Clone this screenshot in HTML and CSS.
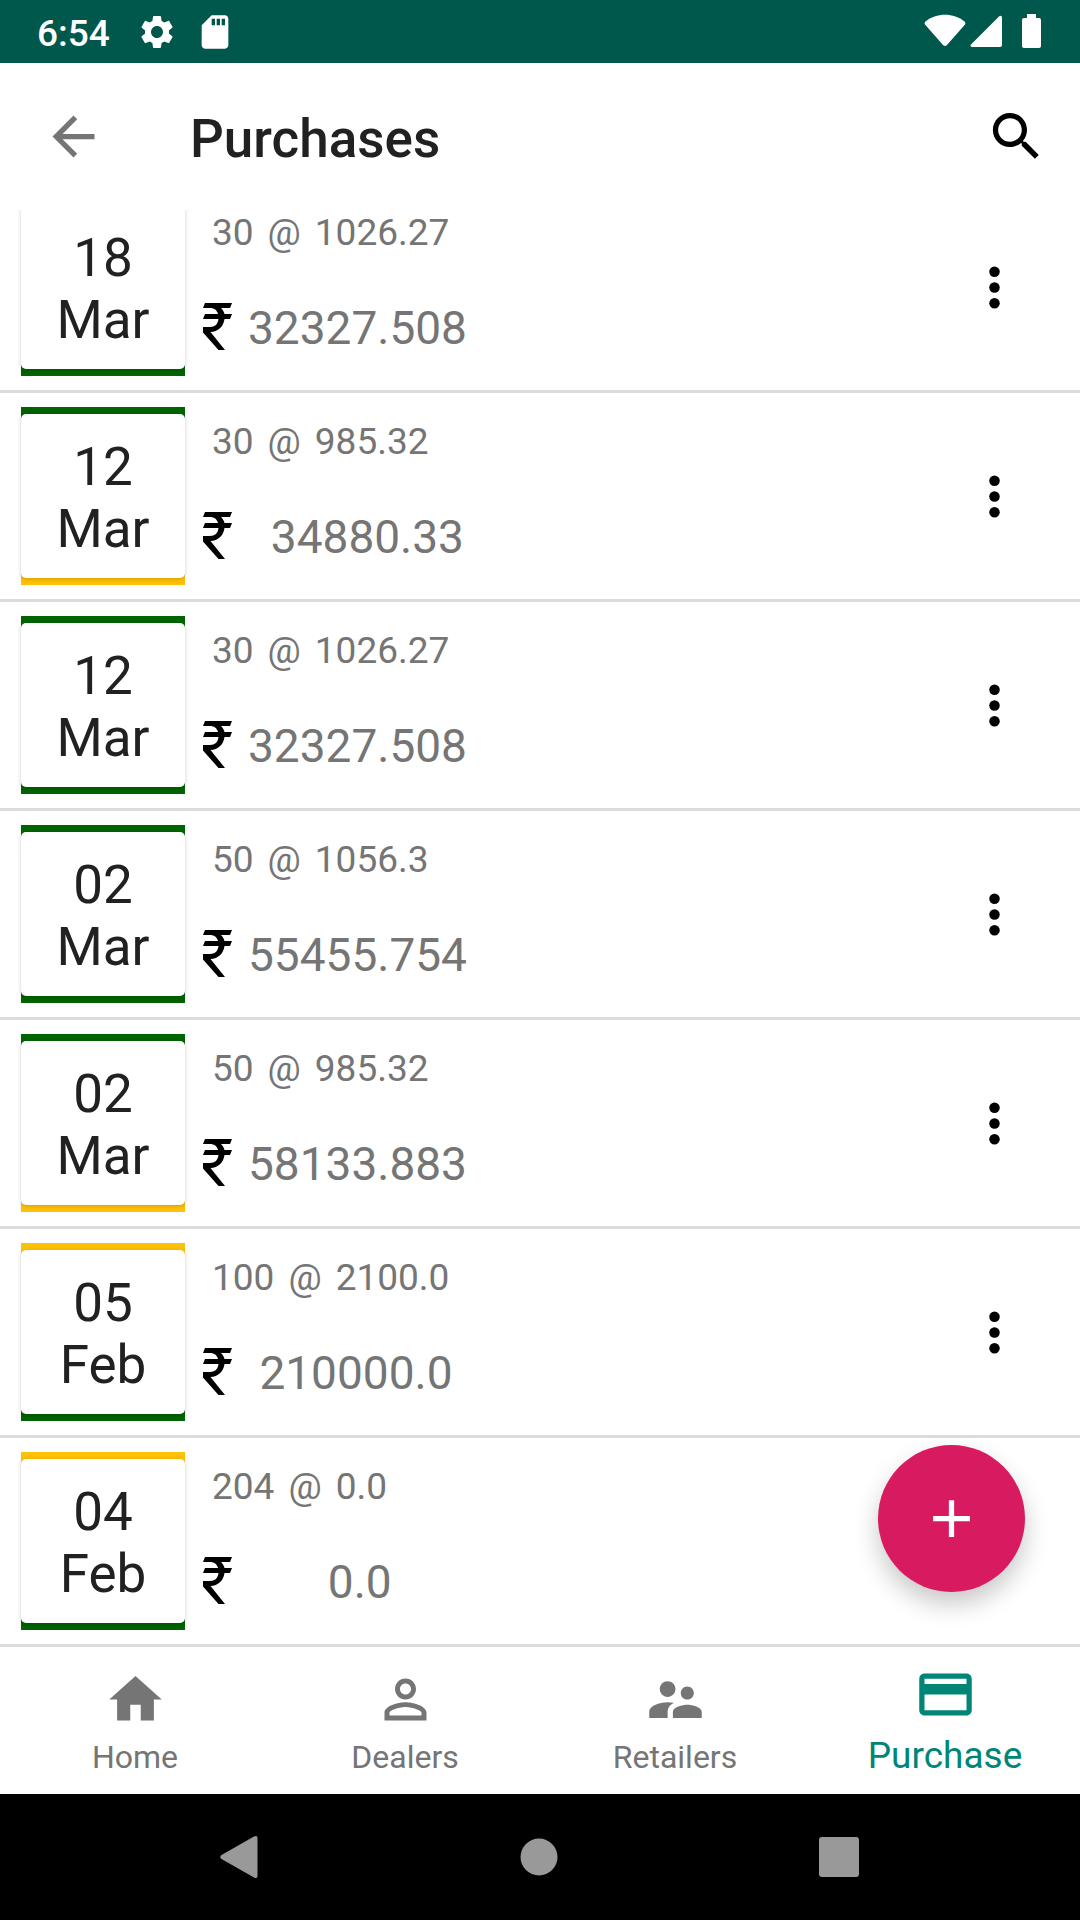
FILE: index.html
```html
<!DOCTYPE html>
<html lang="en">
<head>
    <meta charset="UTF-8">
    <meta name="viewport" content="width=device-width, initial-scale=1.0">
    <title>Purchases</title>
    <link rel="stylesheet" href="styles.css">
</head>
<body>

<!-- shared icons -->
<svg class="sprite" aria-hidden="true">
    <symbol id="rupee" viewBox="0 0 29 47">
        <path d="M2 0H29L27 5H18C20 7 21 9 21.500 11H29L27 16H21.500C20.500 24 15 28.500 7.500 29L22 47H15.500L0 29.500V24H7C12 24 15 21 15.500 16H0L2 11H15C14 7 11 5 7 5H0Z"/>
    </symbol>
    <symbol id="more" viewBox="0 0 24 24">
        <circle cx="12" cy="6" r="2"/><circle cx="12" cy="12" r="2"/><circle cx="12" cy="18" r="2"/>
    </symbol>
</svg>

<div class="status-bar">
    <span class="clock">6:54</span>
    <svg class="status-icon" viewBox="0 0 24 24"><path d="M19.140 12.940c.04-.3.06-.61.06-.94 0-.32-.02-.64-.07-.94l2.030-1.580c.18-.14.23-.41.12-.61l-1.920-3.320c-.12-.22-.37-.29-.59-.22l-2.390.96c-.5-.38-1.030-.7-1.620-.94L14.400 2.810c-.04-.24-.24-.41-.48-.41h-3.840c-.24 0-.43.17-.47.41L9.250 5.350c-.59.24-1.130.57-1.620.94L5.240 5.330c-.22-.08-.47 0-.59.22L2.740 8.870c-.12.21-.08.47.12.61l2.030 1.580c-.05.3-.09.63-.09.94s.02.64.07.94l-2.030 1.580c-.18.14-.23.41-.12.61l1.920 3.320c.12.22.37.29.59.22l2.390-.96c.5.38 1.030.7 1.620.94l.36 2.540c.05.24.24.41.48.41h3.840c.24 0 .44-.17.47-.41l.36-2.540c.59-.24 1.130-.56 1.620-.94l2.390.96c.22.08.47 0 .59-.22l1.920-3.320c.12-.22.07-.47-.12-.61l-2.010-1.580zM12 15.600c-1.980 0-3.600-1.620-3.600-3.600s1.620-3.600 3.600-3.600 3.600 1.620 3.600 3.600-1.620 3.600-3.600 3.600z"/></svg>
    <svg class="status-icon" viewBox="0 0 24 24"><path d="M18 2h-8L4.020 8 4 20c0 1.100.9 2 2 2h12c1.100 0 2-.9 2-2V4c0-1.100-.9-2-2-2zm-6 6h-2V4h2v4zm3 0h-2V4h2v4zm3 0h-2V4h2v4z"/></svg>
    <svg class="signals" viewBox="0 0 118 36">
        <path d="M1.500 7.500C12-1.500 30-1.500 40.500 7.500Q42 9 41 10.500L23 31Q21 33 19 31L1 10.500Q0 9 1.500 7.500Z"/>
        <path d="M47 30.500L75 2.500Q78 .5 78 4V31Q78 33 76 33H48.500Q45.500 32.500 47 30.500Z"/>
        <path d="M103 0H112V4H115Q117 4 117 6V32Q117 34 115 34H100Q98 34 98 32V6Q98 4 100 4H103Z"/>
    </svg>
</div>

<header class="app-bar">
    <button class="icon-button" aria-label="Back">
        <svg viewBox="0 0 24 24"><path d="M20 11H7.830l5.590-5.590L12 4l-8 8 8 8 1.410-1.410L7.830 13H20v-2z"/></svg>
    </button>
    <h1 class="title">Purchases</h1>
    <button class="icon-button dark" aria-label="Search">
        <svg viewBox="0 0 24 24"><path d="M15.500 14h-.79l-.28-.27C15.410 12.590 16 11.110 16 9.500 16 5.910 13.090 3 9.500 3S3 5.910 3 9.500 5.910 16 9.500 16c1.610 0 3.090-.59 4.230-1.570l.27.28v.79l5 4.990L20.490 19l-4.990-5zm-6 0C7.010 14 5 11.990 5 9.500S7.010 5 9.500 5 14 7.010 14 9.500 11.990 14 9.500 14z"/></svg>
    </button>
</header>

<main class="content">
    <ul class="purchases">
        <li class="purchase">
            <div class="date top-green bottom-green"><div class="date-card">18<br>Mar</div></div>
            <div class="details">
                <div class="quantity"><span>30</span><span>@</span><span>1026.27</span></div>
                <div class="total"><svg class="rupee"><use href="#rupee"/></svg><span class="amount">32327.508</span></div>
            </div>
            <button class="icon-button dark" aria-label="More options"><svg><use href="#more"/></svg></button>
        </li>
        <li class="purchase">
            <div class="date top-green bottom-amber"><div class="date-card">12<br>Mar</div></div>
            <div class="details">
                <div class="quantity"><span>30</span><span>@</span><span>985.32</span></div>
                <div class="total"><svg class="rupee"><use href="#rupee"/></svg><span class="amount">  34880.33</span></div>
            </div>
            <button class="icon-button dark" aria-label="More options"><svg><use href="#more"/></svg></button>
        </li>
        <li class="purchase">
            <div class="date top-green bottom-green"><div class="date-card">12<br>Mar</div></div>
            <div class="details">
                <div class="quantity"><span>30</span><span>@</span><span>1026.27</span></div>
                <div class="total"><svg class="rupee"><use href="#rupee"/></svg><span class="amount">32327.508</span></div>
            </div>
            <button class="icon-button dark" aria-label="More options"><svg><use href="#more"/></svg></button>
        </li>
        <li class="purchase">
            <div class="date top-green bottom-green"><div class="date-card">02<br>Mar</div></div>
            <div class="details">
                <div class="quantity"><span>50</span><span>@</span><span>1056.3</span></div>
                <div class="total"><svg class="rupee"><use href="#rupee"/></svg><span class="amount">55455.754</span></div>
            </div>
            <button class="icon-button dark" aria-label="More options"><svg><use href="#more"/></svg></button>
        </li>
        <li class="purchase">
            <div class="date top-green bottom-amber"><div class="date-card">02<br>Mar</div></div>
            <div class="details">
                <div class="quantity"><span>50</span><span>@</span><span>985.32</span></div>
                <div class="total"><svg class="rupee"><use href="#rupee"/></svg><span class="amount">58133.883</span></div>
            </div>
            <button class="icon-button dark" aria-label="More options"><svg><use href="#more"/></svg></button>
        </li>
        <li class="purchase">
            <div class="date top-amber bottom-green"><div class="date-card">05<br>Feb</div></div>
            <div class="details">
                <div class="quantity"><span>100</span><span>@</span><span>2100.0</span></div>
                <div class="total"><svg class="rupee"><use href="#rupee"/></svg><span class="amount"> 210000.0</span></div>
            </div>
            <button class="icon-button dark" aria-label="More options"><svg><use href="#more"/></svg></button>
        </li>
        <li class="purchase">
            <div class="date top-amber bottom-green"><div class="date-card">04<br>Feb</div></div>
            <div class="details">
                <div class="quantity"><span>204</span><span>@</span><span>0.0</span></div>
                <div class="total"><svg class="rupee"><use href="#rupee"/></svg><span class="amount">       0.0</span></div>
            </div>
            <button class="icon-button dark" aria-label="More options"><svg><use href="#more"/></svg></button>
        </li>
    </ul>
    <button class="fab" aria-label="Add purchase">
        <svg viewBox="0 0 24 24"><path d="M19 13h-6v6h-2v-6H5v-2h6V5h2v6h6v2z"/></svg>
    </button>
</main>

<nav class="tabs">
    <a class="tab" href="#home">
        <svg viewBox="0 0 24 24"><path d="M10 20v-6h4v6h5v-8h3L12 3 2 12h3v8z"/></svg>
        <span>Home</span>
    </a>
    <a class="tab" href="#dealers">
        <svg viewBox="0 0 24 24"><path d="M12 5.900c1.160 0 2.100.94 2.100 2.100s-.94 2.100-2.100 2.100S9.900 9.160 9.900 8s.94-2.100 2.100-2.100m0 9c2.970 0 6.100 1.460 6.100 2.100v1.100H5.900V17c0-.64 3.130-2.100 6.100-2.100M12 4C9.790 4 8 5.790 8 8s1.790 4 4 4 4-1.790 4-4-1.790-4-4-4zm0 9c-2.670 0-8 1.340-8 4v3h16v-3c0-2.660-5.330-4-8-4z"/></svg>
        <span>Dealers</span>
    </a>
    <a class="tab" href="#retailers">
        <svg viewBox="0 0 24 24"><path d="M16.500 12c1.380 0 2.490-1.120 2.490-2.500S17.880 7 16.500 7C15.120 7 14 8.120 14 9.500s1.120 2.500 2.500 2.500zM9 11c1.660 0 2.990-1.340 2.990-3S10.660 5 9 5C7.340 5 6 6.340 6 8s1.340 3 3 3zm7.500 3c-1.830 0-5.500.92-5.500 2.750V19h11v-2.250c0-1.830-3.670-2.750-5.500-2.750zM9 13c-2.330 0-7 1.170-7 3.500V19h7v-2.250c0-.85.33-2.340 2.370-3.470C10.500 13.100 9.660 13 9 13z"/></svg>
        <span>Retailers</span>
    </a>
    <a class="tab active" href="#purchase">
        <svg viewBox="0 0 24 24"><path d="M20 4H4c-1.110 0-1.990.89-1.990 2L2 18c0 1.110.89 2 2 2h16c1.110 0 2-.89 2-2V6c0-1.110-.89-2-2-2zm0 14H4v-6h16v6zm0-10H4V6h16v2z"/></svg>
        <span>Purchase</span>
    </a>
</nav>

<div class="system-nav">
    <button aria-label="System back"><svg viewBox="0 0 42 42"><path d="M3.500 19L36 .5Q39.500-1 39.500 2V40Q39.500 43 36 41.500L3.500 23Q1 21 3.500 19Z"/></svg></button>
    <button aria-label="System home"><svg viewBox="0 0 42 42"><circle cx="21" cy="21" r="18.500"/></svg></button>
    <button aria-label="Recent apps"><svg viewBox="0 0 42 42"><rect x="1" y="1" width="40" height="40" rx="3"/></svg></button>
</div>

</body>
</html>
```
FILE: styles.css
```css
* {
    box-sizing: border-box;
}
body {
    margin: 0;
    height: 100vh;
    display: flex;
    flex-direction: column;
    font-family: Roboto, sans-serif;
    background-color: #fff;
    color: #212121;
}
svg {
    display: block;
    fill: currentColor;
}
button {
    padding: 0;
    border: none;
    background: none;
    color: inherit;
    cursor: pointer;
}
.sprite {
    position: absolute;
    width: 0;
    height: 0;
}

/* status bar */
.status-bar {
    flex: none;
    height: 63px;
    padding: 0 38px 0 37px;
    display: flex;
    align-items: center;
    background-color: #00574b;
    color: #fff;
}
.clock {
    font-size: 37px;
    font-weight: 500;
    margin-right: 9px;
    padding-top: 4px;
}
.status-icon {
    width: 40px;
    height: 40px;
    margin-left: 18px;
}
.signals {
    width: 118px;
    height: 36px;
    margin-left: auto;
}

/* app bar */
.app-bar {
    flex: none;
    height: 147px;
    padding: 0 32px 0 42px;
    display: flex;
    align-items: center;
    color: #757575;
}
.icon-button svg {
    width: 63px;
    height: 63px;
}
.dark {
    color: #000;
}
.title {
    flex: 1;
    margin: 0 0 0 85px;
    padding-top: 4px;
    font-size: 53px;
    font-weight: 500;
    color: #212121;
}

/* list */
.content {
    position: relative;
    flex: 1;
    min-height: 0;
}
.purchases {
    height: 100%;
    margin: 0;
    padding: 0;
    list-style: none;
    display: flex;
    flex-direction: column;
    justify-content: flex-end;
    overflow: hidden;
}
.purchase {
    flex: none;
    display: flex;
    align-items: center;
    padding: 14px 54px 14px 21px;
    border-bottom: 3px solid #dcdcdc;
}
.date {
    width: 164px;
    padding: 7px 0;
}
.date-card {
    height: 164px;
    padding-top: 22px;
    border-radius: 5px;
    background-color: #fff;
    box-shadow: 0 1px 4px rgba(0, 0, 0, 0.2);
    font-size: 53px;
    line-height: 62px;
    text-align: center;
}
.top-green.bottom-green {
    background: #006400;
}
.top-green.bottom-amber {
    background: linear-gradient(#006400 50%, #ffc107 50%);
}
.top-amber.bottom-green {
    background: linear-gradient(#ffc107 50%, #006400 50%);
}
.details {
    flex: 1;
    align-self: stretch;
    padding: 13px 18px 0;
    color: #757575;
}
.quantity {
    display: flex;
    gap: 14px;
    padding-left: 9px;
    font-size: 37px;
    line-height: 44px;
}
.total {
    display: flex;
    align-items: center;
    gap: 16px;
    margin-top: 41px;
}
.rupee {
    width: 29px;
    height: 47px;
    color: #000;
}
.amount {
    padding-top: 4px;
    font-size: 46px;
    line-height: 56px;
    white-space: pre;
}
.fab {
    position: absolute;
    right: 55px;
    bottom: 55px;
    width: 147px;
    height: 147px;
    display: flex;
    align-items: center;
    justify-content: center;
    border-radius: 50%;
    background-color: #d81b60;
    color: #fff;
    box-shadow: 0 12px 24px rgba(0, 0, 0, 0.22);
}
.fab svg {
    width: 63px;
    height: 63px;
}

/* bottom tabs */
.tabs {
    flex: none;
    height: 147px;
    display: flex;
}
.tab {
    flex: 1;
    display: flex;
    flex-direction: column;
    align-items: center;
    justify-content: flex-end;
    padding-bottom: 15px;
    color: #757575;
    font-size: 32px;
    line-height: 44px;
    text-decoration: none;
}
.tab svg {
    width: 63px;
    height: 63px;
    margin-bottom: 4px;
}
.tab.active {
    padding-bottom: 16px;
    color: #008577;
    font-size: 37px;
}
.tab.active svg {
    margin-bottom: 8px;
}

/* system navigation */
.system-nav {
    flex: none;
    height: 126px;
    padding-right: 2px;
    display: flex;
    align-items: center;
    justify-content: center;
    gap: 258px;
    background-color: #000;
    color: #999;
}
.system-nav svg {
    width: 42px;
    height: 42px;
}
```
